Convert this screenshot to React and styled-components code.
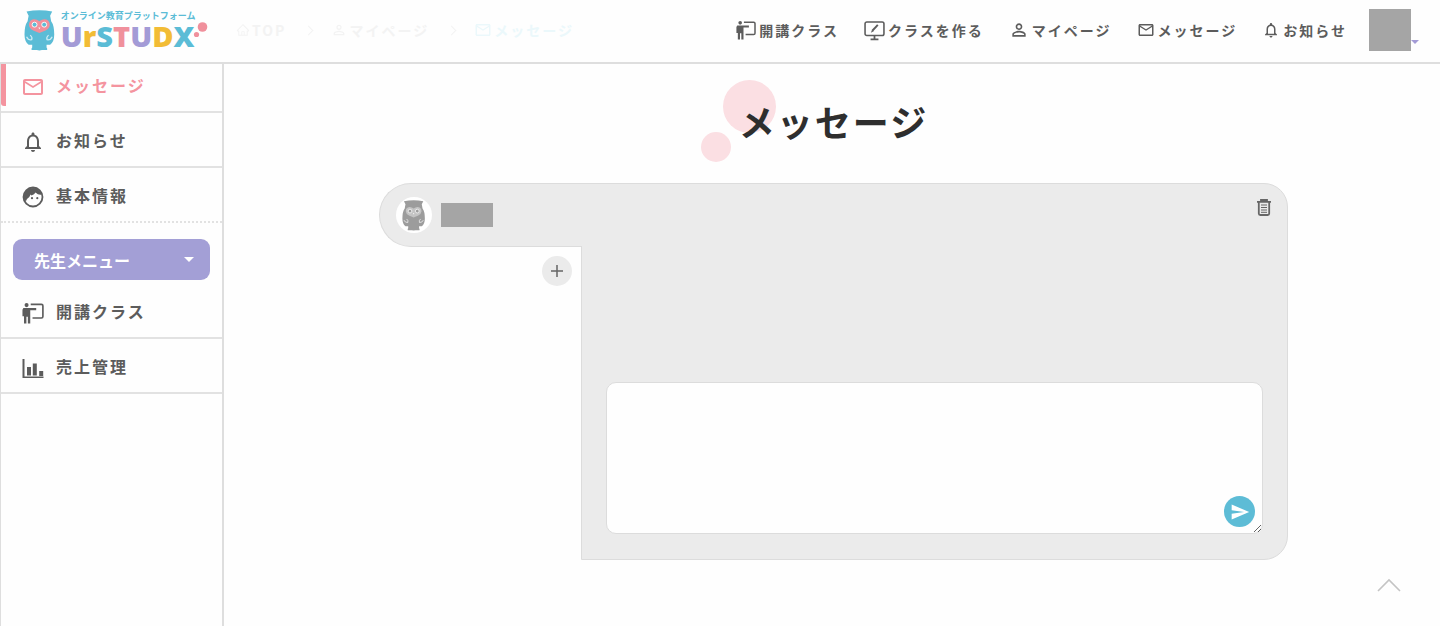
import React, { useState } from "react";
import styled, { createGlobalStyle } from "styled-components";
import {
  MdMailOutline,
  MdNotificationsNone,
  MdPersonOutline,
  MdSend,
} from "react-icons/md";
import { AiOutlineHome } from "react-icons/ai";

//アイコン
const TeachIcon = ({ size = 20 }) => (
  <svg width={size} height={size} viewBox="0 0 24 24" fill="none" aria-hidden="true">
    <circle cx="5" cy="3.4" r="2.2" fill="currentColor" />
    <path
      d="M1.5 6.600h14v2.300H9V23.500H6.400V16H4.800v7.500H2.200v-8H.5V8.500Z"
      fill="currentColor"
    />
    <path d="M9.500 2.600h11.700q1.600 0 1.600 1.600v11.600q0 1.600-1.600 1.600H11.500" stroke="currentColor" strokeWidth="1.800" />
  </svg>
);

const MonitorIcon = ({ size = 21 }) => (
  <svg width={size} height={size} viewBox="0 0 24 24" fill="none" aria-hidden="true">
    <rect x="1.200" y="2.200" width="21.600" height="15.600" rx="2" stroke="currentColor" strokeWidth="1.800" />
    <path d="M12 18v4M7.500 22h9" stroke="currentColor" strokeWidth="2" />
    <path d="M15.800 5.500 9.500 12.300" stroke="currentColor" strokeWidth="2.200" />
    <path d="m9.300 11.200 1.700 1.600-3.200 1.700Z" fill="currentColor" />
  </svg>
);

const FaceIcon = () => (
  <svg width="22" height="22" viewBox="0 0 22 22" fill="none" aria-hidden="true">
    <circle cx="11" cy="11" r="9.500" stroke="currentColor" strokeWidth="1.800" />
    <path
      d="M1.500 11.500A9.500 9.500 0 0 1 20 8.500Q16.500 9.500 13.500 6.500Q12.500 8.500 9.500 9.500L8.500 8.500Q7.500 12 5 13L4 15L2.500 14.500Z"
      fill="currentColor"
    />
    <circle cx="10" cy="12.200" r="1.100" fill="currentColor" />
    <circle cx="15.300" cy="12.200" r="1.100" fill="currentColor" />
  </svg>
);

const ChartIcon = () => (
  <svg width="22" height="22" viewBox="0 0 22 22" aria-hidden="true">
    <path
      d="M.5 2h2v17.500h19V21H.5ZM5 10h4v8.500H5ZM10.800 6.500h4v12h-4ZM17.200 14h4v5h-4Z"
      fill="currentColor"
    />
  </svg>
);

const TrashIcon = () => (
  <svg width="14" height="17" viewBox="0 0 14 17" fill="none" aria-hidden="true">
    <path d="M0 2.800h14M4 2.500V1h6v1.500" stroke="currentColor" strokeWidth="1.800" />
    <path d="M1.800 3v11.500Q1.800 16 3.300 16h7.400q1.500 0 1.500-1.500V3" stroke="currentColor" strokeWidth="1.800" />
    <path d="M4 6h6M4 8.500h6M4 11h6M4 13.300h6" stroke="currentColor" strokeWidth="1" />
  </svg>
);

const Owl = ({ height, body, face }) => (
  <svg width={(height * 30) / 40} height={height} viewBox="0 0 30 40" aria-hidden="true">
    <path
      d="M2.500 1.500Q15-.8 27.500 1.500L25.500 5.500Q26 8 26.500 11Q29.500 15 29.500 24Q29.500 31 25.500 34H22V36.500Q23 37.500 22.500 39H17.500L15 39.500L12.500 39H7.500Q7 37.500 8 36.500V34H4.500Q.5 31 .5 24Q.5 15 3.500 11Q4 8 4.500 5.500Z"
      fill={body}
    />
    <path
      d="M15 11Q12.500 8.800 9.500 9Q5 9.700 4.800 14.500Q5.300 18.500 9 20L15 22.500L21 20Q24.700 18.500 25.200 14.500Q25 9.700 20.500 9Q17.500 8.800 15 11Z"
      fill={face}
    />
    <circle cx="10.300" cy="14.300" r="2.400" fill={body} stroke="#fff" strokeWidth=".9" />
    <circle cx="19.700" cy="14.300" r="2.400" fill={body} stroke="#fff" strokeWidth=".9" />
    <path d="m14 17 1 1.800 1-1.800Z" fill="#fff" />
    <path
      d="M2.500 26Q4 29.500 7.500 29Q8.500 26.500 6 24.500M27.500 26Q26 29.500 22.500 29Q21.500 26.500 24 24.500"
      stroke="#fff"
      strokeWidth="1.200"
      fill="none"
      opacity=".7"
    />
  </svg>
);

const LogoDots = () => (
  <svg width="16" height="16" viewBox="0 0 16 16" aria-hidden="true">
    <circle cx="10.500" cy="5" r="4.800" fill="#f0909c" />
    <circle cx="4.500" cy="12.500" r="2.600" fill="#f0909c" />
  </svg>
);

const navItems = [
  { label: "開講クラス", icon: <TeachIcon size={20} /> },
  { label: "クラスを作る", icon: <MonitorIcon /> },
  { label: "マイページ", icon: <MdPersonOutline size={20} /> },
  { label: "メッセージ", icon: <MdMailOutline size={18} /> },
  { label: "お知らせ", icon: <MdNotificationsNone size={18} /> },
];

const userMenu = [
  { label: "メッセージ", icon: <MdMailOutline size={24} />, active: true },
  { label: "お知らせ", icon: <MdNotificationsNone size={24} /> },
  { label: "基本情報", icon: <FaceIcon />, line: "dotted" },
];

const teacherMenu = [
  { label: "開講クラス", icon: <TeachIcon size={22} /> },
  { label: "売上管理", icon: <ChartIcon /> },
];

const logoLetters = [
  ["U", "#a39bd6"],
  ["r", "#f2bc35"],
  ["S", "#5bbcd6"],
  ["T", "#f0909c"],
  ["U", "#a39bd6"],
  ["D", "#f2bc35"],
  ["X", "#5bbcd6"],
];

const SideList = ({ items }) => (
  <MenuList>
    {items.map((item) => (
      <MenuItem key={item.label} $line={item.line}>
        <MenuLink href="#" $active={item.active}>
          <MenuIcon>{item.icon}</MenuIcon>
          {item.label}
        </MenuLink>
      </MenuItem>
    ))}
  </MenuList>
);

const App = () => {
  const [message, setMessage] = useState("");
  const [open, setOpen] = useState(true);

  function handleSubmit(event) {
    event.preventDefault();
    setMessage("");
  }

  return (
    <>
      <GlobalStyle />
      <Header>
        <Logo href="#" aria-label="UrSTUDX">
          <Owl height={41} body="#5bbcd6" face="#f0909c" />
          <LogoText>
            <LogoCopy>オンライン教育プラットフォーム</LogoCopy>
            <LogoName>
              {logoLetters.map(([letter, color], i) => (
                <Letter key={i} $color={color}>{letter}</Letter>
              ))}
            </LogoName>
          </LogoText>
          <LogoDots />
        </Logo>

        <Breadcrumb aria-label="パンくず">
          <Crumb href="#"><AiOutlineHome size={14} />TOP</Crumb>
          <CrumbArrow />
          <Crumb href="#"><MdPersonOutline size={16} />マイページ</Crumb>
          <CrumbArrow />
          <Crumb href="#" $current><MdMailOutline size={18} />メッセージ</Crumb>
        </Breadcrumb>

        <Nav>
          {navItems.map((item) => (
            <NavLink key={item.label} href="#">
              {item.icon}
              {item.label}
            </NavLink>
          ))}
        </Nav>
        <AccountButton type="button" aria-label="アカウント">
          <AccountImage />
          <Caret $color="#a39bd6" $size={4} />
        </AccountButton>
      </Header>

      <Layout>
        <Sidebar>
          <SideList items={userMenu} />
          <TeacherButton type="button" aria-expanded={open} onClick={() => setOpen(!open)}>
            先生メニュー
            <Caret $color="#fff" $size={5} />
          </TeacherButton>
          {open && <SideList items={teacherMenu} />}
        </Sidebar>

        <Main>
          <Title>メッセージ</Title>

          <Chat>
            <Rooms>
              <Room type="button" aria-label="トーク相手">
                <RoomIcon>
                  <Owl height={31} body="#9c9c9c" face="#c4c4c4" />
                </RoomIcon>
                <RoomName />
              </Room>
              <AddButton type="button" aria-label="追加">
                <svg width="14" height="14" viewBox="0 0 14 14" aria-hidden="true">
                  <path d="M7 1v12M1 7h12" stroke="#666" strokeWidth="1.500" />
                </svg>
              </AddButton>
            </Rooms>
            <Panel>
              <TrashButton type="button" aria-label="削除">
                <TrashIcon />
              </TrashButton>
              <Form onSubmit={handleSubmit}>
                <MessageBox
                  aria-label="メッセージを入力"
                  value={message}
                  onChange={(event) => setMessage(event.target.value)}
                />
                <SendButton type="submit" aria-label="送信">
                  <MdSend size={20} />
                </SendButton>
              </Form>
            </Panel>
          </Chat>
        </Main>
      </Layout>

      <PageTop href="#" aria-label="ページの先頭へ">
        <svg width="24" height="14" viewBox="0 0 24 14" fill="none" aria-hidden="true">
          <path d="M1 13 12 2l11 11" stroke="#c4c4c4" strokeWidth="1.600" />
        </svg>
      </PageTop>
    </>
  );
};

export default App;

const GlobalStyle = createGlobalStyle`
  *{
    box-sizing:border-box;
  }
  body{
    margin:0;
    background:#fefefe;
    color:#5c5c5c;
    font-family:"Noto Sans CJK JP", sans-serif;
    font-weight:bold;
  }
  a{
    color:inherit;
    text-decoration:none;
  }
  button{
    padding:0;
    border:0;
    background:none;
    color:inherit;
    font:inherit;
    cursor:pointer;
  }
  svg{
    flex-shrink:0;
  }
`;

const Header = styled.header`
  position:sticky;
  top:0;
  z-index:2;
  display:flex;
  align-items:center;
  height:64px;
  padding:0 21px 2px 24px;
  background:#fefefe;
  border-bottom:2px solid #dedede;
`;

const Logo = styled.a`
  display:flex;
  align-items:center;
  width:212px;
`;

const LogoText = styled.span`
  display:flex;
  flex-direction:column;
  width:131px;
  margin-left:6px;
`;

const LogoCopy = styled.span`
  color:#5bbcd6;
  font-size:9px;
  line-height:12px;
  white-space:nowrap;
`;

const LogoName = styled.span`
  font-family:"Open Sans", sans-serif;
  font-size:29px;
  font-weight:800;
  line-height:28px;
`;

const Letter = styled.span`
  color:${props => props.$color};
`;

const Breadcrumb = styled.nav`
  display:flex;
  align-items:center;
  gap:19px;
`;

const Crumb = styled.a`
  display:flex;
  align-items:center;
  gap:2px;
  color:${props => props.$current ? "#ebf8fb" : "#f3f3f3"};
  font-size:14px;
  letter-spacing:2px;
  white-space:nowrap;
`;

const CrumbArrow = styled.span`
  width:7px;
  height:7px;
  border:solid #f3f3f3;
  border-width:1px 1px 0 0;
  transform:rotate(45deg);
`;

const Nav = styled.nav`
  display:flex;
  align-items:center;
  gap:25px;
  margin-left:auto;
`;

const NavLink = styled.a`
  display:flex;
  align-items:center;
  gap:3px;
  font-size:14px;
  letter-spacing:2px;
  white-space:nowrap;
`;

const AccountButton = styled.button`
  display:flex;
  align-items:flex-end;
  margin-left:22px;
`;

const AccountImage = styled.span`
  width:42px;
  height:42px;
  background:#a5a5a5;
`;

const Caret = styled.span`
  margin-bottom:${props => props.$size === 4 ? "7px" : "0"};
  border:${props => props.$size}px solid transparent;
  border-top-color:${props => props.$color};
  border-bottom:0;
`;

const Layout = styled.div`
  display:flex;
  min-height:calc(100vh - 64px);
`;

const Sidebar = styled.aside`
  flex:0 0 224px;
  margin-top:-6px;
  border:solid #dedede;
  border-width:0 2px 0 1px;
`;

const MenuList = styled.ul`
  margin:0;
  padding:0;
  list-style:none;
`;

const MenuItem = styled.li`
  height:55px;
  border-bottom:2px ${props => props.$line || "solid"} #e2e2e2;
`;

const MenuLink = styled.a`
  display:flex;
  align-items:center;
  height:48px;
  padding:6px 0 0 15px;
  border-left:5px solid ${props => props.$active ? "#f4949f" : "transparent"};
  border-radius:0 0 3px 3px;
  color:${props => props.$active ? "#f4949f" : "#5c5c5c"};
  font-size:16px;
  letter-spacing:2px;
`;

const MenuIcon = styled.span`
  display:flex;
  justify-content:center;
  width:24px;
  margin:4px 11px 0 0;
`;

const TeacherButton = styled.button`
  display:flex;
  align-items:center;
  justify-content:space-between;
  width:calc(100% - 24px);
  height:41px;
  margin:16px 12px 4px;
  padding:0 16px 0 21px;
  border-radius:9px;
  background:#a39fd6;
  color:#fff;
  font-size:16px;
`;

const Main = styled.main`
  flex:1;
  display:flex;
  flex-direction:column;
  align-items:center;
  padding:30px 0 64px 3px;
`;

const Title = styled.h1`
  position:relative;
  z-index:0;
  margin:0 0 35px;
  color:#2e2e2e;
  font-size:36px;
  letter-spacing:2px;
  line-height:54px;

  &::before,
  &::after{
    content:"";
    position:absolute;
    z-index:-1;
    border-radius:50%;
    background:#fbdfe3;
  }
  &::before{
    top:-14px;
    left:-16px;
    width:53px;
    height:53px;
  }
  &::after{
    top:38px;
    left:-38px;
    width:30px;
    height:30px;
  }
`;

const Chat = styled.section`
  display:grid;
  grid-template-columns:202px 1fr;
  width:75%;
`;

const Rooms = styled.div`
  display:flex;
  flex-direction:column;
  align-items:flex-end;
`;

const Room = styled.button`
  position:relative;
  display:flex;
  align-items:center;
  gap:9px;
  width:calc(100% + 1px);
  height:64px;
  margin-right:-1px;
  padding-left:16px;
  border:1px solid #dcdcdc;
  border-right:0;
  border-radius:32px 0 0 32px;
  background:#ebebeb;
`;

const RoomIcon = styled.span`
  display:flex;
  align-items:center;
  justify-content:center;
  width:36px;
  height:36px;
  border-radius:50%;
  background:#fff;
`;

const RoomName = styled.span`
  width:52px;
  height:24px;
  background:#a5a5a5;
`;

const AddButton = styled.button`
  display:flex;
  align-items:center;
  justify-content:center;
  width:30px;
  height:30px;
  margin:9px 9px 0 0;
  border-radius:50%;
  background:#ebebeb;
`;

const Panel = styled.div`
  display:flex;
  flex-direction:column;
  justify-content:space-between;
  min-height:377px;
  padding:15px 24px 25px;
  border:1px solid #dcdcdc;
  border-radius:0 24px 24px 0;
  background:#ebebeb;
`;

const TrashButton = styled.button`
  display:flex;
  align-self:flex-end;
  margin-right:-8px;
  color:#666;
`;

const Form = styled.form`
  position:relative;
  display:flex;
`;

const MessageBox = styled.textarea`
  width:100%;
  height:152px;
  padding:12px 48px 12px 12px;
  border:1px solid #dcdcdc;
  border-radius:10px;
  outline:0;
  background:#fefefe;
  font:inherit;
  font-size:16px;
  resize:vertical;
`;

const SendButton = styled.button`
  position:absolute;
  right:8px;
  bottom:7px;
  display:flex;
  align-items:center;
  justify-content:center;
  width:31px;
  height:31px;
  border-radius:50%;
  background:#5dbcd6;
  color:#fff;
`;

const PageTop = styled.a`
  position:fixed;
  right:39px;
  bottom:34px;
  display:flex;
`;
